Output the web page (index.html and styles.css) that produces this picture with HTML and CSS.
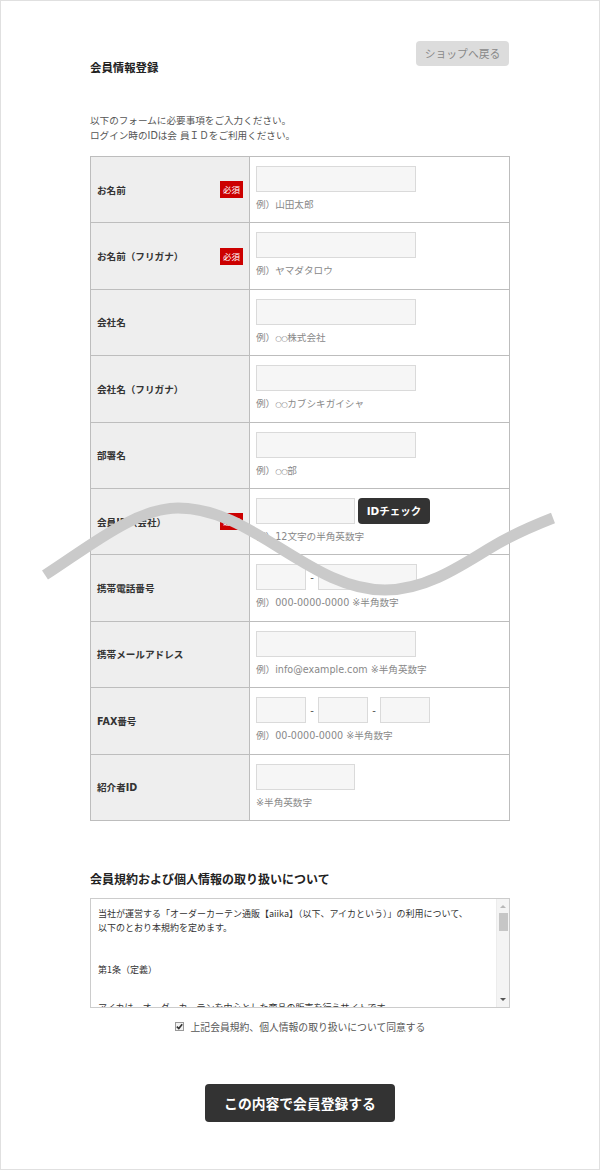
FILE: index.html
```html
<!DOCTYPE html>
<html lang="ja">
<head>
<meta charset="utf-8">
<title>会員情報登録</title>
<link rel="stylesheet" href="styles.css">
</head>
<body>
<div class="page">
  <div class="wrap">
    <div class="header">
      <h1 class="title">会員情報登録</h1>
      <a class="back-btn">ショップへ戻る</a>
    </div>
    <p class="intro">以下のフォームに必要事項をご入力ください。<br>ログイン時のIDは会 員ＩＤをご利用ください。</p>

    <div class="form-table">
      <div class="row">
        <div class="label"><span>お名前</span><span class="req">必須</span></div>
        <div class="cell"><div class="fields"><span class="input w-l"></span></div><p class="note">例）山田太郎</p></div>
      </div>
      <div class="row">
        <div class="label"><span>お名前（フリガナ）</span><span class="req">必須</span></div>
        <div class="cell"><div class="fields"><span class="input w-l"></span></div><p class="note">例）ヤマダタロウ</p></div>
      </div>
      <div class="row">
        <div class="label"><span>会社名</span></div>
        <div class="cell"><div class="fields"><span class="input w-l"></span></div><p class="note">例）<span class="maru">○○</span>株式会社</p></div>
      </div>
      <div class="row">
        <div class="label"><span>会社名（フリガナ）</span></div>
        <div class="cell"><div class="fields"><span class="input w-l"></span></div><p class="note">例）<span class="maru">○○</span>カブシキガイシャ</p></div>
      </div>
      <div class="row">
        <div class="label"><span>部署名</span></div>
        <div class="cell"><div class="fields"><span class="input w-l"></span></div><p class="note">例）<span class="maru">○○</span>部</p></div>
      </div>
      <div class="row">
        <div class="label"><span>会員ID（会社）</span><span class="req">必須</span></div>
        <div class="cell"><div class="fields"><span class="input w-m"></span><a class="id-btn">IDチェック</a></div><p class="note">例）12文字の半角英数字</p></div>
      </div>
      <div class="row">
        <div class="label"><span>携帯電話番号</span></div>
        <div class="cell"><div class="fields"><span class="input w-s"></span><span class="dash">-</span><span class="input w-m"></span></div><p class="note">例）000-0000-0000 ※半角数字</p></div>
      </div>
      <div class="row">
        <div class="label"><span>携帯メールアドレス</span></div>
        <div class="cell"><div class="fields"><span class="input w-l"></span></div><p class="note">例）info@example.com ※半角英数字</p></div>
      </div>
      <div class="row">
        <div class="label"><span>FAX番号</span></div>
        <div class="cell"><div class="fields"><span class="input w-s"></span><span class="dash">-</span><span class="input w-s"></span><span class="dash">-</span><span class="input w-s"></span></div><p class="note">例）00-0000-0000 ※半角数字</p></div>
      </div>
      <div class="row">
        <div class="label"><span>紹介者ID</span></div>
        <div class="cell"><div class="fields"><span class="input w-m"></span></div><p class="note">※半角英数字</p></div>
      </div>
    </div>

    <h2 class="section-title">会員規約および個人情報の取り扱いについて</h2>
    <div class="terms">
      <div class="terms-text">
        <p>当社が運営する「オーダーカーテン通販【aiika】（以下、アイカという）」の利用について、<br>以下のとおり本規約を定めます。</p>
        <p class="gap1">第1条（定義）</p>
        <p class="gap2">アイカは、オーダーカーテンを中心とした商品の販売を行うサイトです。</p>
      </div>
      <div class="scrollbar">
        <span class="arrow up"></span>
        <span class="thumb"></span>
        <span class="arrow down"></span>
      </div>
    </div>

    <div class="agree">
      <span class="checkbox"><svg width="7" height="7" viewBox="0 0 7 7"><path d="M0.8 3.6 L2.8 5.6 L6.2 1.2" fill="none" stroke="#333" stroke-width="1.6"/></svg></span>
      <span>上記会員規約、個人情報の取り扱いについて同意する</span>
    </div>

    <div class="submit-wrap"><a class="submit">この内容で会員登録する</a></div>
  </div>

  <svg class="wave" width="600" height="140" viewBox="0 470 600 140">
    <path d="M45,575 C90,546 136,508 178,508 C216,508 247.8,528 281.5,549 C315.2,570 347.5,590 385,590 C422.5,590 454.8,570 488.5,549 C508.5,536.6 535,525 553,518" fill="none" stroke="#cacaca" stroke-width="11"/>
  </svg>
</div>
</body>
</html>
```

FILE: styles.css
```css
* { box-sizing: border-box; }
html, body { margin: 0; padding: 0; background: #fff; }
body {
  font-family: "DejaVu Sans", "Noto Sans CJK JP", sans-serif;
  color: #333;
}
.page {
  position: relative;
  width: 600px;
  height: 1170px;
  border: 1px solid #e0e0e0;
  overflow: hidden;
}
.wrap {
  width: 420px;
  margin-left: 89px;
}
.header {
  display: flex;
  justify-content: space-between;
  align-items: flex-start;
  padding-top: 40px;
}
.title {
  margin: 17px 0 0;
  font-family: "Noto Sans CJK JP", sans-serif;
  font-size: 11.4px;
  line-height: 18px;
  font-weight: 700;
  color: #222;
}
.back-btn {
  display: block;
  width: 93px;
  height: 25px;
  margin-right: 1px;
  background: #dcdcdc;
  border-radius: 4px;
  color: #888;
  font-family: "Noto Sans CJK JP", sans-serif;
  font-size: 10.8px;
  line-height: 25px;
  text-align: center;
}
.intro {
  margin: 36.5px 0 0;
  height: 30px;
  font-size: 9.6px;
  line-height: 15px;
  color: #555;
}
.form-table {
  margin-top: 13.5px;
  border: 1px solid #bdbdbd;
}
.row {
  display: flex;
  height: 66.4px;
  border-top: 1px solid #bdbdbd;
}
.row:first-child { height: 65.4px; border-top: none; }
.label {
  width: 159px;
  flex: none;
  display: flex;
  align-items: center;
  justify-content: space-between;
  padding: 0 6px;
  background: #eeeeee;
  border-right: 1px solid #bdbdbd;
  font-size: 9.6px;
  font-weight: 700;
  color: #333;
}
.req {
  display: block;
  width: 23px;
  height: 17px;
  background: #cc0000;
  color: #fff;
  font-family: "Noto Sans CJK JP", sans-serif;
  font-size: 8.5px;
  font-weight: 400;
  line-height: 17px;
  text-align: center;
}
.cell {
  flex: 1;
  padding: 9px 6px 0;
}
.fields {
  display: flex;
  align-items: center;
  height: 26px;
}
.input {
  display: block;
  height: 26px;
  background: #f6f6f6;
  border: 1px solid #dadada;
}
.w-l { width: 160px; }
.w-m { width: 99px; }
.w-s { width: 50px; }
.dash {
  width: 12px;
  text-align: center;
  font-size: 10px;
  color: #555;
}
.id-btn {
  display: block;
  width: 72px;
  height: 26px;
  margin-left: 3px;
  background: #333;
  border-radius: 4px;
  color: #fff;
  font-size: 10.5px;
  font-weight: 700;
  line-height: 26px;
  text-align: center;
}
.note {
  margin: 5px 0 0;
  height: 16px;
  font-size: 9.6px;
  line-height: 16px;
  color: #888;
}
.maru {
  font-size: 7.5px;
  letter-spacing: -0.5px;
}
.section-title {
  margin: 49px 0 0;
  font-family: "Noto Sans CJK JP", sans-serif;
  font-size: 12px;
  line-height: 18px;
  font-weight: 700;
  color: #222;
}
.terms {
  position: relative;
  display: flex;
  height: 110px;
  margin-top: 10px;
  border: 1px solid #cccccc;
  overflow: hidden;
}
.terms-text {
  flex: 1;
  padding: 8px 6px 0 7px;
  font-family: "Noto Sans CJK JP", sans-serif;
  font-size: 9px;
  line-height: 14px;
  color: #333;
  white-space: nowrap;
}
.terms-text p { margin: 0; }
.terms-text .gap1 { margin-top: 28px; }
.terms-text .gap2 { margin-top: 24px; }
.scrollbar {
  width: 13px;
  flex: none;
  display: flex;
  flex-direction: column;
  align-items: center;
  background: #f4f4f4;
  border-left: 1px solid #ececec;
}
.arrow {
  width: 0;
  height: 0;
  border-left: 3px solid transparent;
  border-right: 3px solid transparent;
}
.arrow.up { margin-top: 6px; border-bottom: 3px solid #b8b8b8; }
.arrow.down { margin-top: auto; margin-bottom: 6px; border-top: 3px solid #555; }
.thumb {
  width: 9px;
  height: 18px;
  margin-top: 5px;
  background: #c6c6c6;
}
.agree {
  display: flex;
  align-items: center;
  justify-content: center;
  gap: 7px;
  margin-top: 11px;
  font-family: "Noto Sans CJK JP", sans-serif;
  font-size: 9.8px;
  line-height: 16px;
  color: #555;
}
.checkbox {
  display: flex;
  align-items: center;
  justify-content: center;
  width: 9px;
  height: 9px;
  border: 1px solid #999;
  background: #f2f2f2;
}
.submit-wrap {
  display: flex;
  justify-content: center;
  margin-top: 49px;
}
.submit {
  display: block;
  width: 190px;
  height: 38px;
  background: #333;
  border-radius: 4px;
  color: #fff;
  font-family: "Noto Sans CJK JP", sans-serif;
  font-size: 13.8px;
  font-weight: 700;
  line-height: 38px;
  text-align: center;
}
.wave {
  position: absolute;
  left: -1px;
  top: 469px;
  pointer-events: none;
}
```
